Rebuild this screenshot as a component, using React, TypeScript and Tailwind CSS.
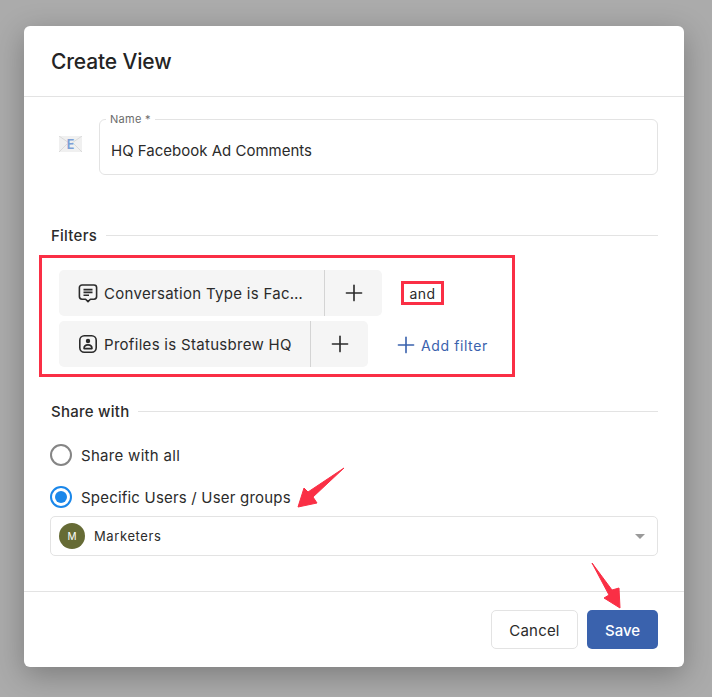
import { Plus } from 'lucide-react'

const font = { fontFamily: 'Inter, "Liberation Sans", sans-serif' }

function SectionTitle({ title }: { title: string }) {
  return (
    <div className="flex items-center gap-[9px]">
      <span className="pt-[2px] pl-[1px] text-[15px] leading-[18px] font-medium tracking-[0.25px] text-[#2b2b2b]">
        {title}
      </span>
      <div className="h-px flex-1 bg-[#e3e3e3]" />
    </div>
  )
}

function FilterChip({
  icon,
  label,
  labelWidth,
}: {
  icon: React.ReactNode
  label: string
  labelWidth: string
}) {
  return (
    <div className="flex h-[46px] rounded-[5px] bg-[#f5f5f5]">
      <div
        className={`flex h-full items-center gap-[6px] border-r border-[#d4d4d4] pl-[19px] ${labelWidth}`}
      >
        {icon}
        <span className="pt-[2px] text-[15px] leading-[20px] tracking-[0.3px] whitespace-nowrap text-[#2b2b2b]">
          {label}
        </span>
      </div>
      <div className="flex w-[57px] items-center justify-center text-[#2b2b2b]">
        <Plus className="h-[26px] w-[26px]" strokeWidth={1.5} />
      </div>
    </div>
  )
}

function MessageIcon() {
  return (
    <svg width="20" height="20" viewBox="0 0 20 20" fill="none" stroke="#2b2b2b" strokeWidth="1.6">
      <path d="M4 2h12a2.6 2.6 0 0 1 2.6 2.6v9a2.6 2.6 0 0 1-2.6 2.6h-3.6L10 18.6l-2.4-2.4H4a2.6 2.6 0 0 1-2.6-2.6v-9A2.6 2.6 0 0 1 4 2Z" strokeLinejoin="round" />
      <path d="M5.5 6.6h9M5.5 9.4h9M5.5 12.2h5.5" />
    </svg>
  )
}

function ProfileIcon() {
  return (
    <svg width="20" height="20" viewBox="0 0 20 20" fill="none" stroke="#2b2b2b" strokeWidth="1.6">
      <rect x="1.8" y="1.8" width="16.4" height="16.4" rx="4.5" />
      <circle cx="10" cy="7" r="1.4" fill="#2b2b2b" />
      <path d="M6 14.6c0-2.4 1.8-3.7 4-3.7s4 1.3 4 3.7Z" strokeLinejoin="round" />
    </svg>
  )
}

function MailIcon() {
  return (
    <svg width="23" height="16" viewBox="0 0 23 16">
      <rect width="23" height="16" fill="#f0f0f0" />
      <path d="M0 0l11.5 8L23 0M0 16l8-8M23 16l-8-8" fill="none" stroke="#dadada" strokeWidth="1" />
      <text x="11.5" y="13" textAnchor="middle" fontSize="12.5" fontWeight="700" fill="#7d9fd6">
        E
      </text>
    </svg>
  )
}

function Arrow({ className, points }: { className: string; points: string }) {
  return (
    <svg className={className} fill="#fa2f45">
      <polygon points={points} strokeLinejoin="round" stroke="#fa2f45" strokeWidth="1" />
    </svg>
  )
}

export default function App() {
  return (
    <div style={font} className="relative h-[697px] w-[712px] overflow-hidden bg-[#ababab] pt-[26px] pl-[24px]">
      <div className="flex h-[641px] w-[660px] flex-col rounded-[6px] bg-white shadow-[0_8px_30px_rgba(0,0,0,0.28)]">
        <div className="flex h-[71px] shrink-0 items-center border-b border-[#e3e3e3] pt-[1px] pl-[27px]">
          <h2 className="text-[21px] font-medium tracking-[-0.15px] text-[#242424]">Create View</h2>
        </div>

        <div className="flex-1 px-[26px]">
          <div className="mt-[23px] flex items-start">
            <div className="mt-[16px] ml-[9px] w-[40px] shrink-0">
              <MailIcon />
            </div>
            <fieldset className="h-[62px] flex-1 -translate-y-[7px] rounded-[6px] border border-[#e3e3e3] pl-[6px]">
              <legend className="px-[4px] text-[11px] leading-[12px] tracking-[0.3px] text-[#6b6b6b]">
                Name *
              </legend>
              <div className="mt-[16px] pl-[5px] text-[15px] leading-[20px] text-[#2b2b2b]">
                HQ Facebook Ad Comments
              </div>
            </fieldset>
          </div>

          <div className="mt-[43px]">
            <SectionTitle title="Filters" />
          </div>

          <div className="mt-[10px] -ml-[11px] flex h-[122px] w-[476px] items-stretch border-[3px] border-[#fa2f45] pt-[12px] pl-[17px]">
            <div className="flex flex-col gap-[5px]">
              <div className="flex items-center">
                <FilterChip icon={<MessageIcon />} label="Conversation Type is Fac…" labelWidth="w-[266px]" />
                <div className="ml-[19px] flex h-[24px] w-[43px] items-center justify-center border-[3px] border-[#fa2f45] text-[14px] tracking-[0.35px] text-[#2b2b2b]">
                  and
                </div>
              </div>
              <div className="flex items-center">
                <FilterChip icon={<ProfileIcon />} label="Profiles is Statusbrew HQ" labelWidth="w-[252px]" />
                <div className="ml-[25px] flex items-center gap-[2px] pt-[2px] text-[14px] tracking-[0.6px] text-[#3a62ad]">
                  <Plus className="h-[26px] w-[26px]" strokeWidth={1.5} />
                  Add filter
                </div>
              </div>
            </div>
          </div>

          <div className="mt-[24px]">
            <SectionTitle title="Share with" />
          </div>

          <div className="mt-[23px] flex items-center gap-[9px]">
            <div className="h-[22px] w-[22px] rounded-full border-2 border-[#858585]" />
            <span className="pt-[2px] text-[15px] leading-[20px] tracking-[0.3px] text-[#2b2b2b]">Share with all</span>
          </div>
          <div className="mt-[20px] flex items-center gap-[9px]">
            <div className="flex h-[22px] w-[22px] items-center justify-center rounded-full border-2 border-[#1a87ea]">
              <div className="h-[12px] w-[12px] rounded-full bg-[#1a87ea]" />
            </div>
            <span className="pt-[2px] text-[15px] leading-[20px] tracking-[0.2px] text-[#2b2b2b]">Specific Users / User groups</span>
          </div>

          <div className="mt-[8px] flex h-[40px] items-center rounded-[5px] border border-[#e3e3e3] pl-[8px]">
            <div className="flex h-[26px] w-[26px] items-center justify-center rounded-full bg-[#666b35] text-[10px] text-white">
              M
            </div>
            <span className="ml-[9px] pt-[2px] text-[13px] tracking-[0.6px] text-[#2b2b2b]">Marketers</span>
            <div className="mr-[12px] ml-auto h-0 w-0 border-x-[5px] border-t-[5px] border-x-transparent border-t-[#9a9a9a]" />
          </div>
        </div>

        <div className="flex h-[76px] shrink-0 items-center justify-end gap-[9px] border-t border-[#e3e3e3] pr-[26px]">
          <button className="h-[39px] w-[87px] rounded-[5px] border border-[#e3e3e3] bg-white pt-[3px] text-[15px] tracking-[0.2px] text-[#2b2b2b]">
            Cancel
          </button>
          <button className="h-[39px] w-[71px] rounded-[5px] bg-[#3a62ad] pt-[3px] text-[15px] font-medium text-white">
            Save
          </button>
        </div>
      </div>

      <Arrow
        className="absolute top-[466px] left-[296px] h-[44px] w-[50px]"
        points="48,2 17,31 21,37 2,41 8,22 12,26"
      />
      <Arrow
        className="absolute top-[562px] left-[590px] h-[48px] w-[34px]"
        points="2,1 22,28 29,26 30,46 14,36 19,33"
      />
    </div>
  )
}
